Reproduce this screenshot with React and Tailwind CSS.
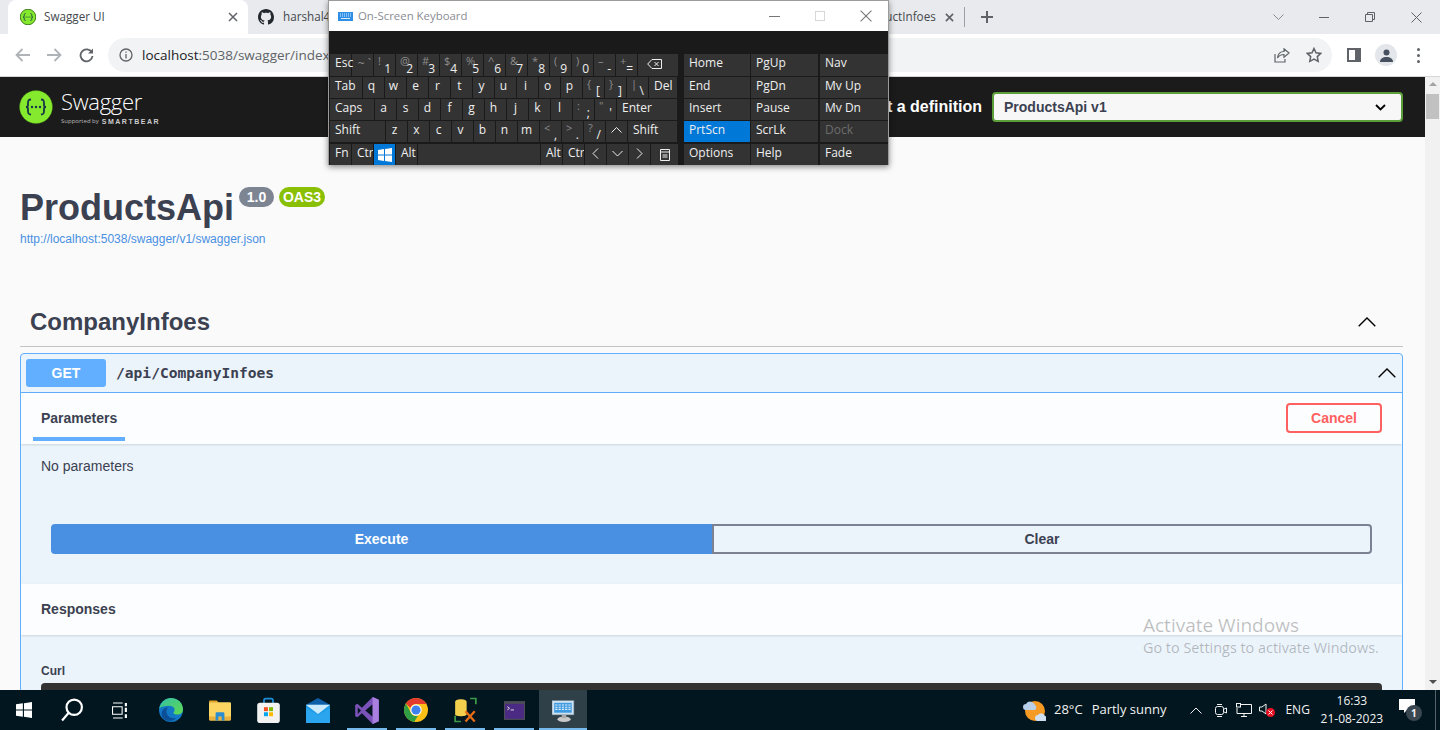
import React from "react";

const sans = "font-['Liberation_Sans',Arial,sans-serif]";
const ui = "font-['Open_Sans','Noto_Sans',sans-serif]";

function Key({ w = "w-[21px]", children, extra = "", center = false, blue = false, clip = true }) {
  return (
    <div className={`${w} h-full shrink-0 flex items-center whitespace-nowrap pb-[3px] ${clip ? "overflow-hidden" : ""} ${blue ? "bg-[#0078d7]" : "bg-[#333333]"} ${center ? "justify-center" : "pl-[5px]"} ${extra}`}>
      {children}
    </div>
  );
}

function Dual({ top, main }) {
  return (
    <div className="w-[21px] h-full shrink-0 bg-[#333333] relative overflow-hidden">
      <span className="absolute left-[4px] top-0 text-[11px] leading-[14px] text-[#8c8c8c]">{top}</span>
      <span className="absolute right-[4px] bottom-0 text-[12px] leading-[15px] text-[#efefef]">{main}</span>
    </div>
  );
}

function Row({ h = "h-[21px]", children, mt = "" }) {
  return <div className={`flex gap-px ${h} ${mt}`}>{children}</div>;
}

function Letters({ items }) {
  return items.map((c) => (
    <Key key={c} center extra="pr-[4px]">
      {c}
    </Key>
  ));
}

function Duals({ items }) {
  return items.map(([t, m]) => <Dual key={t + m} top={t} main={m} />);
}

function WinLogo({ size = 14, color = "#fff" }) {
  return (
    <svg width={size} height={size} viewBox="0 0 14 14" fill={color}>
      <path d="M0 2 6 1.100V6.600H0ZM7 1 14 0V6.600H7ZM0 7.400H6V12.900L0 12ZM7 7.400H14V14L7 13Z" />
    </svg>
  );
}

function Keyboard() {
  return (
    <div className={`absolute left-[328px] top-0 w-[561px] h-[165px] bg-[#1a1a1a] border border-b-0 border-[#9b9b9b] shadow-[0_2px_6px_rgba(0,0,0,0.45)] text-[12px] text-[#efefef] ${ui}`}>
      <div className="h-[30px] bg-white flex items-center text-[#8b8b94]">
        <svg width="15" height="9" viewBox="0 0 15 9" className="ml-[9px]">
          <rect width="15" height="9" fill="#2f8fe6" />
          <path d="M2 2h1M4 2h1M6 2h1M8 2h1M10 2h1M12 2h1M2 4h1M4 4h1M6 4h1M8 4h1M10 4h1M12 4h1M3 6.500h9" stroke="#d8ecfb" strokeWidth="1" />
        </svg>
        <span className="ml-[5px] text-[11.400px]">On-Screen Keyboard</span>
        <div className="ml-auto flex items-center pr-[16px] gap-[35px]">
          <div className="w-[11px] h-px bg-[#777]" />
          <div className="w-[10px] h-[10px] border border-[#d8d8d8]" />
          <svg width="12" height="12" viewBox="0 0 11 11" stroke="#777" fill="none">
            <path d="M.5.500l10 10M10.500.5l-10 10" />
          </svg>
        </div>
      </div>
      <div className="flex pl-px pt-[23px]">
        <div className="w-[348px] flex flex-col gap-px">
          <Row h="h-[22px]">
            <Key clip={false} extra="relative z-10 !pb-[5px]">Esc</Key>
            <Key center extra="text-[#8c8c8c] pl-[4px]">~ `</Key>
            <Duals items={[["!", "1"], ["@", "2"], ["#", "3"], ["$", "4"], ["%", "5"], ["^", "6"], ["&", "7"], ["*", "8"], ["(", "9"], [")", "0"], ["–", "-"], ["+", "="]]} />
            <Key w="w-[40px]" center extra="pr-[8px]">
              <svg width="15" height="10" viewBox="0 0 15 10" fill="none" stroke="#efefef">
                <path d="M5 .5h9.500v9H5L.7 5ZM7.500 3l4 4M11.500 3l-4 4" />
              </svg>
            </Key>
          </Row>
          <Row>
            <Key w="w-[32px]">Tab</Key>
            <Letters items={["q", "w", "e", "r", "t", "y", "u", "i", "o", "p"]} />
            <Duals items={[["{", "["], ["}", "]"], ["|", "\\"]]} />
            <Key w="w-[28px]">Del</Key>
          </Row>
          <Row>
            <Key w="w-[44px]">Caps</Key>
            <Letters items={["a", "s", "d", "f", "g", "h", "j", "k", "l"]} />
            <Duals items={[[":", ";"], ['"', "'"]]} />
            <Key w="w-[60px]">Enter</Key>
          </Row>
          <Row>
            <Key w="w-[55px]">Shift</Key>
            <Letters items={["z", "x", "c", "v", "b", "n", "m"]} />
            <Duals items={[["<", ","], [">", "."], ["?", "/"]]} />
            <Key center>
              <svg width="11" height="6" viewBox="0 0 11 6" fill="none" stroke="#efefef"><path d="M.5 5.500l5-5 5 5" /></svg>
            </Key>
            <Key w="w-[49px]">Shift</Key>
          </Row>
          <Row mt="mt-px">
            <Key>Fn</Key>
            <Key>Ctrl</Key>
            <Key center blue extra="!pb-0"><WinLogo size={14} /></Key>
            <Key>Alt</Key>
            <Key w="w-[122px]"> </Key>
            <Key>Alt</Key>
            <Key>Ctrl</Key>
            <Key center>
              <svg width="7" height="11" viewBox="0 0 7 11" fill="none" stroke="#efefef"><path d="M6 .5l-5 5 5 5" /></svg>
            </Key>
            <Key center>
              <svg width="11" height="7" viewBox="0 0 11 7" fill="none" stroke="#efefef"><path d="M.5 1l5 5 5-5" /></svg>
            </Key>
            <Key center>
              <svg width="7" height="11" viewBox="0 0 7 11" fill="none" stroke="#efefef"><path d="M1 .5l5 5-5 5" /></svg>
            </Key>
            <Key w="w-[27px]" center extra="!pb-0">
              <svg width="10" height="12" viewBox="0 0 10 12" fill="none" stroke="#efefef"><path d="M.5.500h9v11h-9ZM.5 3h9" /><path d="M2.500 6h5M2.500 8h5" /></svg>
            </Key>
          </Row>
        </div>
        <div className="ml-[6px] flex gap-px">
          {[
            ["w-[66px]", ["Home", "End", "Insert", "PrtScn", "Options"]],
            ["w-[67px]", ["PgUp", "PgDn", "Pause", "ScrLk", "Help"]],
            ["w-[68px] ml-px", ["Nav", "Mv Up", "Mv Dn", "Dock", "Fade"]],
          ].map(([w, col]) => (
            <div key={col[0]} className={`${w} flex flex-col gap-px`}>
              {col.map((t, i) => (
                <div key={t} className={i === 0 ? "h-[22px]" : i === 4 ? "h-[21px] mt-px" : "h-[21px]"}>
                  <Key w="w-full" blue={t === "PrtScn"} extra={`${t === "Dock" ? "text-[#6d6d6d]" : ""} ${i === 0 ? "!pb-[5px]" : ""}`}>{t}</Key>
                </div>
              ))}
            </div>
          ))}
        </div>
      </div>
    </div>
  );
}

function SwaggerMark({ size = 16 }) {
  return (
    <svg width={size} height={size} viewBox="0 0 34 34">
      <circle cx="17" cy="17" r="16.500" fill="#85ea2d" stroke="#3a7a12" strokeWidth={size < 20 ? 2 : 0.3} />
      <path d="M12 9.500c-3 0-3 1.500-3 3.500v2c0 1.500-.8 2-2 2 1.200 0 2 .5 2 2v2c0 2 0 3.500 3 3.500M22 9.500c3 0 3 1.500 3 3.500v2c0 1.500.8 2 2 2-1.200 0-2 .5-2 2v2c0 2 0 3.500-3 3.500" fill="none" stroke="#173647" strokeWidth="1.800" />
      <circle cx="13" cy="17" r="1.200" fill="#173647" />
      <circle cx="17" cy="17" r="1.200" fill="#173647" />
      <circle cx="21" cy="17" r="1.200" fill="#173647" />
    </svg>
  );
}

function TabStrip() {
  return (
    <div className={`h-[34px] bg-[#e8eaed] flex items-center relative ${ui} text-[#45494e]`}>
      <div className="ml-[8px] w-[240px] h-[34px] bg-white rounded-t-[8px] flex items-center pl-[12px] pr-[10px] text-[11.700px]">
        <SwaggerMark size={16} />
        <span className="ml-[8px]">Swagger UI</span>
        <svg className="ml-auto" width="10" height="10" viewBox="0 0 10 10" stroke="#5f6368" strokeWidth="1.500"><path d="M1 1l8 8M9 1l-8 8" /></svg>
      </div>
      <svg className="ml-[10px]" width="16" height="16" viewBox="0 0 16 16" fill="#24292f">
        <path d="M8 0C3.580 0 0 3.580 0 8c0 3.540 2.290 6.530 5.470 7.590.4.070.55-.17.55-.38 0-.19-.01-.82-.01-1.490-2.010.37-2.530-.49-2.690-.94-.09-.23-.48-.94-.82-1.130-.28-.15-.68-.52-.01-.53.630-.01 1.080.58 1.230.82.720 1.210 1.870.87 2.330.66.070-.52.280-.87.510-1.070-1.780-.2-3.640-.89-3.640-3.950 0-.87.31-1.590.82-2.150-.08-.2-.36-1.020.08-2.120 0 0 .67-.21 2.200.82.640-.18 1.320-.27 2-.27s1.360.09 2 .27c1.530-1.040 2.200-.82 2.200-.82.440 1.100.16 1.920.08 2.120.51.560.82 1.270.82 2.150 0 3.070-1.870 3.750-3.650 3.950.29.250.54.730.54 1.480 0 1.070-.01 1.930-.01 2.200 0 .21.150.46.55.38A8.010 8.010 0 0 0 16 8c0-4.420-3.580-8-8-8Z" />
      </svg>
      <span className="ml-[9px] text-[11.700px]">harshal4</span>
      <span className="ml-[555px] text-[11.700px]">uctInfoes</span>
      <svg className="ml-[9px]" width="9" height="9" viewBox="0 0 10 10" stroke="#5f6368" strokeWidth="1.800"><path d="M1 1l8 8M9 1l-8 8" /></svg>
      <div className="ml-[10px] w-px h-[20px] bg-[#9aa0a6]" />
      <svg className="ml-[16px]" width="12" height="12" viewBox="0 0 12 12" stroke="#5f6368" strokeWidth="2"><path d="M6 0v12M0 6h12" /></svg>
      <div className="ml-auto flex items-center pr-[18px]">
        <svg width="11" height="6" viewBox="0 0 11 6" fill="none" stroke="#8b8d91"><path d="M.5.500l5 5 5-5" /></svg>
        <div className="ml-[35px] w-[10px] h-px bg-[#5f6368]" />
        <svg className="ml-[36px]" width="10" height="10" viewBox="0 0 10 10" fill="none" stroke="#5f6368"><path d="M.5 2.500h7v7h-7ZM2.500 2.500v-2h7v7h-2" /></svg>
        <svg className="ml-[36px]" width="11" height="11" viewBox="0 0 11 11" fill="none" stroke="#5f6368"><path d="M.5.500l10 10M10.500.5l-10 10" /></svg>
      </div>
    </div>
  );
}

function Toolbar() {
  return (
    <div className={`h-[43px] bg-white border-b border-[#d6d6d6] flex items-center ${ui}`}>
      <svg className="ml-[15px]" width="15" height="14" viewBox="0 0 15 14" fill="none" stroke="#b0b3b7" strokeWidth="1.800"><path d="M15 7H2M7.500 1 1.500 7l6 6" /></svg>
      <svg className="ml-[17px]" width="15" height="14" viewBox="0 0 15 14" fill="none" stroke="#b0b3b7" strokeWidth="1.800"><path d="M0 7h13M7.500 1l6 6-6 6" /></svg>
      <svg className="ml-[17px]" width="15" height="15" viewBox="0 0 15 15" fill="none" stroke="#5f6368" strokeWidth="1.800"><path d="M12.800 4.500A6 6 0 1 0 13.500 8" /><path d="M14 .5v5H9Z" fill="#5f6368" stroke="none" /></svg>
      <div className="ml-[14px] w-[1224px] h-[34px] rounded-full bg-[#f1f3f4] flex items-center pl-[11px] pr-[10px]">
        <svg width="14" height="14" viewBox="0 0 14 14" fill="none" stroke="#5f6368" strokeWidth="1.300"><circle cx="7" cy="7" r="6" /><path d="M7 6v4.500M7 3.500v1.300" /></svg>
        <span className="ml-[9px] text-[13.500px] whitespace-nowrap text-[#202124]">localhost<span className="text-[#5f6368]">:5038/swagger/index.html</span></span>
        <svg className="ml-auto" width="16" height="15" viewBox="0 0 16 15" fill="none" stroke="#5f6368" strokeWidth="1.200"><path d="M1 6v8h10v-3" /><path d="M15 5 10 .8v2.700C6 3.500 4 6 3.500 10c1.500-2.500 3.500-3.500 6.500-3.500v2.700Z" /></svg>
        <svg className="ml-[16px]" width="16" height="16" viewBox="0 0 16 16" fill="none" stroke="#5f6368" strokeWidth="1.500"><path d="m8 1.500 2 4.300 4.700.6-3.400 3.200.9 4.700L8 12l-4.200 2.300.9-4.700L1.300 6.400 6 5.800Z" /></svg>
      </div>
      <div className="ml-[15px] w-[14px] h-[14px] border-2 border-r-[6px] border-[#5f6368]" />
      <div className="ml-[14px] w-[22px] h-[22px] rounded-full bg-[#e3e6ea] flex items-center justify-center">
        <svg width="13" height="13" viewBox="0 0 13 13" fill="#46505f"><circle cx="6.500" cy="3.500" r="3" /><path d="M0 13c0-3.500 3-5 6.500-5s6.500 1.500 6.500 5Z" /></svg>
      </div>
      <div className="ml-[20px] flex flex-col gap-[3px]">
        <div className="w-[3px] h-[3px] rounded-full bg-[#5f6368]" />
        <div className="w-[3px] h-[3px] rounded-full bg-[#5f6368]" />
        <div className="w-[3px] h-[3px] rounded-full bg-[#5f6368]" />
      </div>
    </div>
  );
}

function Chevron({ className = "" }) {
  return (
    <svg className={className} width="18" height="10" viewBox="0 0 18 10" fill="none" stroke="#000" strokeWidth="1.400"><path d="M.7 9.300 9 1l8.300 8.300" /></svg>
  );
}

function Swagger() {
  return (
    <div className={`w-[1425px] shrink-0 overflow-hidden bg-[#fafafa] text-[#3b4151] ${sans}`}>
      <div className="h-[60px] bg-[#1b1b1b] flex items-center pl-[19px] pr-[22px]">
        <SwaggerMark size={34} />
        <div className="ml-[8px] flex flex-col text-white">
          <span className={`text-[22px] leading-[26px] tracking-[-0.3px] font-light ${ui}`}>Swagger</span>
          <div className="flex items-center h-[9px] leading-[9px] mt-[3px]">
            <span className={`text-[6px] text-[#bbb] ${ui}`}>Supported by</span>
            <span className="ml-[3px] text-[7px] font-bold tracking-[1.500px] text-[#ccc]">SMARTBEAR</span>
          </div>
        </div>
        <span className="ml-auto text-[16px] font-bold text-white">Select a definition</span>
        <div className="ml-[10px] w-[411px] h-[30px] bg-[#f7f7f7] border-2 border-[#5b9e3a] rounded-[4px] flex items-center pl-[10px] pr-[15px]">
          <span className="text-[14px] font-bold">ProductsApi v1</span>
          <svg className="ml-auto" width="11" height="7" viewBox="0 0 11 7" fill="none" stroke="#000" strokeWidth="1.800"><path d="m1 1 4.500 4.500L10 1" /></svg>
        </div>
      </div>
      <div className="pl-[20px] pr-[22px]">
        <div className="pt-[50px] flex items-start h-[92px]">
          <span className="text-[36px] leading-[44px] font-bold mt-[-1px]">ProductsApi</span>
          <span className="ml-[5px] h-[20px] w-[35px] rounded-[10px] bg-[#7d8492] text-white text-[14px] font-bold flex items-center justify-center">1.0</span>
          <span className="ml-[5px] h-[20px] w-[46px] rounded-[10px] bg-[#89bf04] text-white text-[14px] font-bold flex items-center justify-center">OAS3</span>
        </div>
        <div className="mt-[2px] text-[12px] leading-[16px] text-[#4990e2]">http://localhost:5038/swagger/v1/swagger.json</div>
        <div className="mt-[47px] h-[53px] border-b border-[#c4c4c4] flex items-center pl-[10px] pr-[27px] pt-[4px]">
          <span className="text-[24px] font-bold">CompanyInfoes</span>
          <Chevron className="ml-auto" />
        </div>
        <div className="mt-[6px] border border-[#61affe] rounded-[4px] bg-[#ebf3fb] h-[340px] overflow-hidden">
          <div className="h-[39px] border-b border-[#61affe] flex items-center pl-[5px] pr-[6px]">
            <div className="w-[80px] h-[28px] rounded-[3px] bg-[#61affe] text-white text-[14px] font-bold flex items-center justify-center">GET</div>
            <span className="ml-[10px] font-['DejaVu_Sans_Mono',monospace] text-[14.600px] font-bold">/api/CompanyInfoes</span>
            <Chevron className="ml-auto" />
          </div>
          <div className="h-[51px] bg-[#fcfdfe] shadow-[0_1px_2px_rgba(0,0,0,0.12)] flex items-start pl-[12px] pr-[20px]">
            <div className="w-[92px] h-[48px] border-b-4 border-[#61affe] pl-[8px] pt-[17px] text-[14px] leading-[17px] font-bold">Parameters</div>
            <div className="ml-auto mt-[10px] w-[96px] h-[30px] border-2 border-[#ff6060] rounded-[4px] text-[#ff6060] text-[14px] font-bold flex items-center justify-center">Cancel</div>
          </div>
          <div className="pl-[20px] pt-[14px] h-[80px] text-[14px] leading-[17px]">No parameters</div>
          <div className="pl-[30px] pr-[30px] flex h-[60px]">
            <div className="w-[661px] h-[30px] rounded-l-[4px] bg-[#4990e2] text-white text-[14px] font-bold flex items-center justify-center">Execute</div>
            <div className="flex-1 h-[30px] rounded-r-[4px] border-2 border-[#7d8293] text-[14px] font-bold flex items-center justify-center">Clear</div>
          </div>
          <div className="h-[51px] bg-[#fcfdfe] shadow-[0_1px_2px_rgba(0,0,0,0.12)] pl-[20px] pt-[17px] text-[14px] leading-[17px] font-bold">Responses</div>
          <div className="pl-[20px] pt-[29px] text-[12px] leading-[14px] font-bold">Curl</div>
          <div className="mx-[20px] mt-[5px] h-[20px] rounded-t-[4px] bg-[#333333]" />
        </div>
      </div>
    </div>
  );
}

function Scrollbar() {
  return (
    <div className="flex-1 bg-[#f1f1f1] flex flex-col items-center">
      <div className="w-0 h-0 mt-[5px] border-x-[4px] border-x-transparent border-b-[4px] border-b-[#a3a3a3]" />
      <div className="mt-[8px] w-[13px] h-[25px] bg-[#c1c1c1]" />
      <div className="mt-auto mb-[6px] w-0 h-0 border-x-[4px] border-x-transparent border-t-[4px] border-t-[#505050]" />
    </div>
  );
}

function Edge() {
  return (
    <svg width="24" height="24" viewBox="0 0 21 21">
      <defs>
        <linearGradient id="eg1" x1="0" y1="0" x2="1" y2="1"><stop offset="0" stopColor="#35c1a5" /><stop offset="1" stopColor="#5fd94f" /></linearGradient>
      </defs>
      <circle cx="10.500" cy="10.500" r="10.500" fill="#1277c4" />
      <path d="M.3 9C1.500 3.500 6 0 10.500 0 16.500 0 21 4.500 21 10c0 3-2.500 4.500-5 4.500-2 0-3.500-.8-3.500-1.800 2-1 1.800-6-3.500-6C4.500 6.700 2 7.500.3 9Z" fill="url(#eg1)" />
      <path d="M3 17C1 12 4 8.200 8 8c-1.500 1.500-2 3.500-1 6 1 3 4.500 4.500 8 3.500-3 3.500-9 3.200-12-.5Z" fill="#0c4f96" />
    </svg>
  );
}

function Explorer() {
  return (
    <svg width="22" height="21" viewBox="0 0 20 19">
      <path d="M0 1.500A1 1 0 0 1 1 .5h6l2 2H0Z" fill="#e5a323" />
      <rect y="2" width="20" height="16.500" rx="1" fill="#fcd462" />
      <path d="M0 15h20v2.500a1 1 0 0 1-1 1H1a1 1 0 0 1-1-1Z" fill="#eab13d" />
      <path d="M6 18.500V12a1 1 0 0 1 1-1h6a1 1 0 0 1 1 1v6.500h-2.500V15h-3v3.500Z" fill="#2b8ed2" />
    </svg>
  );
}

function Store() {
  return (
    <svg width="23" height="26" viewBox="0 0 20 23">
      <path d="M6 6V3a1.500 1.500 0 0 1 1.500-1.500h5A1.500 1.500 0 0 1 14 3v3" fill="none" stroke="#1c8fd9" strokeWidth="1.500" />
      <rect y="5" width="20" height="18" rx="2.500" fill="#f2f2f2" />
      <rect x="6" y="9" width="3.500" height="3.500" fill="#f25022" />
      <rect x="10.500" y="9" width="3.500" height="3.500" fill="#7fba00" />
      <rect x="6" y="13.500" width="3.500" height="3.500" fill="#00a4ef" />
      <rect x="10.500" y="13.500" width="3.500" height="3.500" fill="#ffb900" />
    </svg>
  );
}

function Mail() {
  return (
    <svg width="24" height="25" viewBox="0 0 21 22">
      <path d="M0 6 10.500 0 21 6v1H0Z" fill="#0f5ea8" />
      <rect y="6" width="21" height="16" fill="#1e9ce8" />
      <path d="M0 6h21L10.500 14Z" fill="#cbeafb" />
      <path d="M0 22V9l10.500 6L21 9v13Z" fill="#2aa5ee" />
    </svg>
  );
}

function VS() {
  return (
    <svg width="24" height="27" viewBox="0 0 21 24">
      <path d="M15.500 0 21 2.500v19L15.500 24 6 14.500 2 18l-2-1V7l2-1 4 3.500Z" fill="#7b52b8" />
      <path d="M15.500 6.500 9 12l6.500 5.500Z" fill="#01161f" />
      <path d="M15.500 0 21 2.500v19L15.500 24Z" fill="#a97fe0" />
      <path d="M2.300 9v6l2.800-3Z" fill="#01161f" />
    </svg>
  );
}

function Chrome() {
  return (
    <svg width="24" height="24" viewBox="0 0 21 21">
      <circle cx="10.500" cy="10.500" r="10.500" fill="#fbc116" />
      <path d="M10.500 0a10.500 10.500 0 0 1 9.100 5.250H10.500a5.250 5.250 0 0 0-4.900 3.400L1.700 4.800A10.500 10.500 0 0 1 10.500 0Z" fill="#e33b2e" />
      <path d="M1.700 4.800 6 12.800a5.250 5.250 0 0 0 6.200 2.700L8.900 20.900A10.500 10.500 0 0 1 1.700 4.800Z" fill="#2f9e44" />
      <circle cx="10.500" cy="10.500" r="5" fill="#fff" />
      <circle cx="10.500" cy="10.500" r="4" fill="#3f82ed" />
    </svg>
  );
}

function DbTool() {
  return (
    <svg width="23" height="26" viewBox="0 0 20 22" fill="none">
      <path d="M14 1h5v5M1 16v5h5" stroke="#3e9b48" strokeWidth="1.500" />
      <path d="M1 4c0-3 10-3 10 0v11c0 2-10 2-10 0Z" fill="#f2cf4d" />
      <path d="m10 12 8 9M18 12l-8 9" stroke="#e66d16" strokeWidth="2" />
    </svg>
  );
}

function Term() {
  return (
    <svg width="21" height="19" viewBox="0 0 19 17">
      <rect width="19" height="17" fill="#4d4d57" />
      <rect x="1" y="2.500" width="17" height="13.500" fill="#4b2a83" />
      <path d="M3 5l2 1.500-2 1.500M6 8h3" stroke="#ddd" strokeWidth="0.900" fill="none" />
    </svg>
  );
}

function Osk() {
  return (
    <svg width="23" height="25" viewBox="0 0 21 22">
      <rect x="0" y="2" width="20" height="13" fill="#cfe2f2" stroke="#7a8c99" strokeWidth="0.500" />
      <rect x="2" y="4" width="16" height="9" fill="#3f9be0" />
      <path d="M3 6h14M3 8h14M3 10h14" stroke="#dff0fb" strokeDasharray="2 1" />
      <ellipse cx="11" cy="19" rx="6" ry="2.500" fill="#c9c9c9" />
      <rect x="9" y="15" width="4" height="3" fill="#a9a9a9" />
    </svg>
  );
}

function TaskSlot({ children, ml = "ml-[9px]", w = "w-[40px]", active = false }) {
  return (
    <div className={`${w} ${ml} h-full shrink-0 flex items-center justify-center relative ${active ? "bg-[#2f4049]" : ""}`}>
      {children}
      <div className="absolute left-0 right-0 bottom-0 h-[2px] bg-[#76b9ed]" />
    </div>
  );
}

function Taskbar() {
  return (
    <div className={`h-[40px] bg-[#01161f] flex items-center relative text-[#f2f2f2] ${ui}`}>
      <div className="ml-[16px]"><WinLogo size={16} /></div>
      <svg className="ml-[29px]" width="22" height="24" viewBox="0 0 20 21" fill="none" stroke="#fff" strokeWidth="2">
        <circle cx="12" cy="8" r="7" />
        <path d="M7 13 1 20" />
      </svg>
      <svg className="ml-[29px]" width="16" height="17" viewBox="0 0 15 15" fill="none" stroke="#fff" strokeWidth="1">
        <path d="M1 .5h9M1 14.500h9M.5 4h9v7h-9Z" />
        <path d="M13 .5v3M13 5v4M13 11v3.500" strokeWidth="2" />
      </svg>
      <div className="ml-[31px] w-[24px] shrink-0"><Edge /></div>
      <div className="ml-[26px] w-[22px] shrink-0"><Explorer /></div>
      <div className="ml-[26px] w-[23px] shrink-0"><Store /></div>
      <div className="ml-[26px] w-[24px] shrink-0"><Mail /></div>
      <TaskSlot ml="ml-[17px]"><VS /></TaskSlot>
      <TaskSlot><Chrome /></TaskSlot>
      <TaskSlot><DbTool /></TaskSlot>
      <TaskSlot><Term /></TaskSlot>
      <TaskSlot ml="ml-[5px]" w="w-[48px]" active><Osk /></TaskSlot>

      <svg className="ml-[435px]" width="24" height="23" viewBox="0 0 24 23">
        <circle cx="13" cy="12" r="10" fill="#f59a23" />
        <path d="M1 8a3 3 0 0 1 3-3 5 5 0 0 1 9 1 3 3 0 0 1 0 5H3a3 3 0 0 1-2-3Z" fill="#b8d0ea" />
        <path d="M13 19a3 3 0 0 1 3-3 4 4 0 0 1 7 1 2.500 2.500 0 0 1-1 5h-7a3 3 0 0 1-2-3Z" fill="#cfe0f2" />
      </svg>
      <span className="ml-[8px] text-[13px] whitespace-nowrap">28°C</span>
      <span className="ml-[9px] text-[13px] whitespace-nowrap">Partly sunny</span>
      <svg className="ml-[24px]" width="12" height="7" viewBox="0 0 12 7" fill="none" stroke="#f2f2f2"><path d="M.5 6.500 6 1l5.500 5.500" /></svg>
      <svg className="ml-[13px]" width="12" height="15" viewBox="0 0 12 15" fill="none" stroke="#f2f2f2"><path d="M2 1.500h5M2 13.500h5" /><rect x=".5" y="3.500" width="8" height="8" rx="2" /><path d="m9 6 2.500-1v5L9 9" /></svg>
      <svg className="ml-[9px]" width="16" height="14" viewBox="0 0 16 14" fill="none" stroke="#f2f2f2"><path d="M4 1.500h11.500v9H1V5" /><rect x=".5" y=".5" width="4" height="3.500" /><path d="M8 10.500v3M5 13.500h6" /></svg>
      <div className="ml-[7px] relative w-[16px] h-[14px]">
        <svg width="9" height="12" viewBox="0 0 9 12" fill="none" stroke="#f2f2f2"><path d="M.5 4h2.500l4-3v10L3 8H.5Z" /></svg>
        <div className="absolute left-[7px] top-[5px] w-[9px] h-[9px] rounded-full bg-[#e81123] flex items-center justify-center">
          <svg width="5" height="5" viewBox="0 0 5 5" stroke="#fff"><path d="m.5.5 4 4M4.500.5l-4 4" /></svg>
        </div>
      </div>
      <span className="ml-[10px] text-[12px]">ENG</span>
      <div className="ml-[13px] flex flex-col items-center text-[12px] leading-[18px] whitespace-nowrap w-[58px]">
        <span>16:33</span>
        <span>21-08-2023</span>
      </div>
      <div className="ml-[18px] relative w-[20px] h-[22px]">
        <svg width="16" height="15" viewBox="0 0 16 15" fill="#fff"><path d="M0 0h16v11H8l-3 3v-3H0Z" /></svg>
        <div className="absolute left-[7px] top-[6px] w-[16px] h-[16px] rounded-full bg-[#3a4750] text-[10px] font-bold flex items-center justify-center">1</div>
      </div>
      <div className="absolute right-[4px] top-0 w-px h-full bg-[#55646c]" />
    </div>
  );
}

export default function App() {
  return (
    <div className="w-[1440px] h-[730px] relative overflow-hidden flex flex-col bg-white">
      <TabStrip />
      <Toolbar />
      <div className="h-[613px] flex overflow-hidden">
        <Swagger />
        <Scrollbar />
      </div>
      <Taskbar />
      <Keyboard />
      <div className={`absolute left-[1143px] top-[613px] text-[#000]/25 whitespace-nowrap ${ui}`}>
        <div className="text-[19px] leading-[25px]">Activate Windows</div>
        <div className="text-[14.400px] leading-[20px]">Go to Settings to activate Windows.</div>
      </div>
    </div>
  );
}
